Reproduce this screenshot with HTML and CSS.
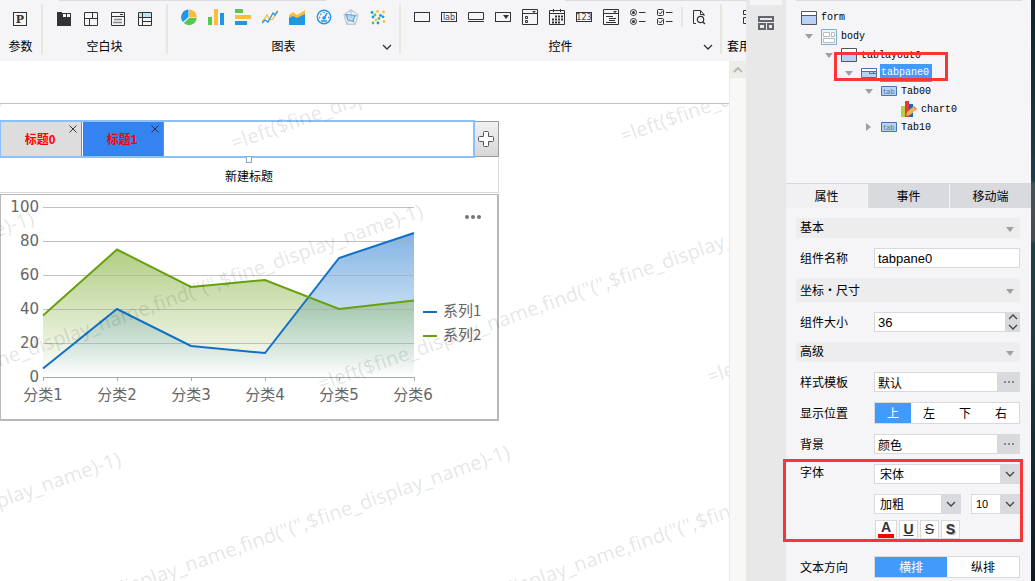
FILE: index.html
```html
<!DOCTYPE html>
<html lang="zh-CN">
<head>
<meta charset="utf-8">
<title>tabpane0</title>
<meta name="viewport" content="width=device-width, initial-scale=1">
<link rel="stylesheet" href="styles.css">
</head>
<body>
<div class="app">
  <main class="work">
    <header class="ribbon">
      <section class="group group-param">
        <div class="icons">
          <svg class="ico" viewBox="0 0 16 18"><rect x="1.5" y="3.5" width="13" height="13" fill="none" stroke="#333"/><text x="8" y="14" text-anchor="middle" class="ico-p">P</text></svg>
        </div>
        <div class="group-name">参数</div>
      </section>
      <section class="group">
        <div class="icons">
          <svg class="ico" viewBox="0 0 16 18"><path d="M1 3h5v1h9v13H1z" fill="#333"/><path d="M7 5h3v3H7zM11 5h3v3h-3z" fill="#f5f5f8"/></svg>
          <svg class="ico" viewBox="0 0 16 18"><path d="M1.500 3.500h13v13h-13zM1.500 9.500h13M9.500 3.500v6M6.500 9.500v7" fill="none" stroke="#333"/></svg>
          <svg class="ico" viewBox="0 0 16 18"><path d="M1.500 3.500h13v13h-13zM1.500 7.500h13" fill="none" stroke="#333"/><path d="M10 5h3v1h-3z" fill="#333"/><path d="M4 10.500h8M3 13.500h9" stroke="#888" stroke-width="1.500"/></svg>
          <svg class="ico" viewBox="0 0 16 18"><path d="M2 4h12v4H2z" fill="#bde3f7"/><path d="M1.500 3.500h13v13h-13zM1.500 8.500h13M5.500 3.500v13M5.500 12.500h9" fill="none" stroke="#333"/></svg>
        </div>
        <div class="group-name">空白块</div>
      </section>
      <section class="group">
        <div class="icons">
          <svg class="ico" viewBox="0 0 16 18"><path d="M7.500 8V0.500A7.600 7.600 0 0 0 2 13z" fill="#2196e3"/><path d="M8 8.500V0.500A7.600 7.600 0 0 1 15.800 8.500z" fill="#fdbd3a"/><path d="M8 9h7.700A7.700 7.700 0 0 1 2.800 14z" fill="#56c84c"/></svg>
          <svg class="ico" viewBox="0 0 16 18"><path d="M0 8h4v8H0z" fill="#56c84c"/><path d="M6 0h4v16H6z" fill="#fdbd3a"/><path d="M12 4h4v12h-4z" fill="#2196e3"/></svg>
          <svg class="ico" viewBox="0 0 16 18"><path d="M0 0h8v4H0z" fill="#56c84c"/><path d="M0 6h16v4H0z" fill="#fdbd3a"/><path d="M0 12h12v4H0z" fill="#2196e3"/></svg>
          <svg class="ico" viewBox="0 0 16 18"><path d="M0 13l5-7 3 5 3-1 4-8" fill="none" stroke="#fdbd3a" stroke-width="1.300"/><path d="M0 14l3-3 3 2 5-9 2 2 3-4" fill="none" stroke="#2196e3" stroke-width="1.300"/></svg>
          <svg class="ico" viewBox="0 0 16 18"><path d="M0 6l4-3 4 3 8-5v11H0z" fill="#fdbd3a"/><path d="M0 9l4-2 4 2 8-4v11H0z" fill="#2196e3"/></svg>
          <svg class="ico" viewBox="0 0 16 18"><circle cx="8" cy="8" r="6.700" fill="none" stroke="#2196e3" stroke-width="1.400"/><path d="M8 3v1M4.300 5l1 .8M3 8.500h1.200M12 8.500h1.200M5 12h6" stroke="#2196e3" stroke-width="1.500"/><path d="M8.500 9l2.500-5" stroke="#2196e3" stroke-width="1.500"/><circle cx="8" cy="9" r="1.800" fill="#2196e3"/></svg>
          <svg class="ico" viewBox="0 0 16 18"><path d="M8 .8l7 5-2.700 9.400H3.700L1 5.800zM8 8V1M8 8l7-2M8 8l4 7M8 8l-4 7M8 8L1 6" fill="none" stroke="#c9ccd1" stroke-width="1.400"/><path d="M3 5.500l9 1-2 6-5-1.500z" fill="#a7d7f4" fill-opacity=".4" stroke="#42a9e8" stroke-width="1.200"/></svg>
          <svg class="ico" viewBox="0 0 16 18"><g fill="#fdbd3a"><circle cx="7.500" cy="2.500" r="1.400"/><circle cx="13.500" cy="3" r="1.400"/><circle cx="6" cy="11" r="1.400"/><circle cx="14" cy="12.500" r="1.400"/></g><g fill="#2196e3"><circle cx="2" cy="3.500" r="1.400"/><circle cx="10.500" cy="6.500" r="1.400"/><circle cx="13" cy="7.800" r="1.400"/><circle cx="8" cy="14" r="1.400"/><circle cx="3" cy="8" r="1.400"/></g><g fill="#56c84c"><circle cx="5" cy="6" r="1.400"/><circle cx="9" cy="9.500" r="1.400"/><circle cx="3" cy="14" r="1.400"/></g></svg>
        </div>
        <div class="group-name">图表</div>
        <button class="more" aria-label="更多图表"><svg viewBox="0 0 10 6"><path d="M1 1l4 4 4-4" fill="none" stroke="#333" stroke-width="1.300"/></svg></button>
      </section>
      <section class="group">
        <div class="icons">
          <svg class="ico" viewBox="0 0 16 18"><rect x=".5" y="3.500" width="15" height="9" fill="none" stroke="#333"/></svg>
          <svg class="ico" viewBox="0 0 16 18"><rect x=".5" y="3.500" width="15" height="9" fill="none" stroke="#333"/><text x="8" y="11" text-anchor="middle" class="ico-txt">lab</text></svg>
          <svg class="ico" viewBox="0 0 16 18"><path d="M.5 3.500h15v7H.5zM0 12.500h16" fill="none" stroke="#333"/></svg>
          <svg class="ico" viewBox="0 0 16 18"><rect x=".5" y="3.500" width="15" height="9" fill="none" stroke="#333"/><path d="M8 6h6l-3 4z" fill="#333"/></svg>
          <svg class="ico" viewBox="0 0 16 18"><path d="M.5 .5h15v15H.5zM.5 4.500h15M3.500 7.500h2v2h-2zM3.500 11.500h2v2h-2z" fill="none" stroke="#333"/><path d="M10 2h4l-2 2z" fill="#333"/></svg>
          <svg class="ico" viewBox="0 0 16 18"><path d="M.5 1.500h15v14H.5zM.5 4.500h15M4.500 0v3M11.500 0v3" fill="none" stroke="#333"/><path d="M6 7.500h8M3 10.500h11M3 13.500h8" stroke="#333" stroke-width="2" stroke-dasharray="2 1"/></svg>
          <svg class="ico" viewBox="0 0 16 18"><rect x=".5" y="3.500" width="15" height="9" fill="none" stroke="#333"/><text x="8" y="11" text-anchor="middle" class="ico-txt">123</text></svg>
          <svg class="ico" viewBox="0 0 16 18"><path d="M.5 .5h15v15H.5zM.5 4.500h15M3 7.500h7M6 9.500h7M6 11.500h6M3 13.500h10" fill="none" stroke="#333"/><path d="M10 2h4l-2 2z" fill="#333"/></svg>
          <svg class="ico" viewBox="0 0 16 18"><g fill="none" stroke="#333"><circle cx="3.500" cy="3.500" r="3"/><circle cx="3.500" cy="12.500" r="3"/><path d="M9 3.500h6.500M9 12.500h6.500"/></g><circle cx="3.500" cy="3.500" r="1.500" fill="#333"/><circle cx="3.500" cy="12.500" r="1.500" fill="#333"/></svg>
          <svg class="ico" viewBox="0 0 16 18"><g fill="none" stroke="#333"><rect x=".5" y=".5" width="6" height="6" rx="1"/><rect x=".5" y="9.500" width="6" height="6" rx="1"/><path d="M2 3.500l1.300 1.500L5.500 2M2 12.500l1.300 1.500L5.500 11M9 3.500h6.500M9 12.500h6.500"/></g></svg>
          <span class="sep"></span>
          <svg class="ico" viewBox="0 0 16 18"><path d="M5 14.500H2.500V1.500h7l3.500 4V7M9.500 1.500v4H13" fill="none" stroke="#333"/><circle cx="9.500" cy="10.500" r="3.200" fill="none" stroke="#333" stroke-width="1.200"/><path d="M11.800 13l2.200 2" stroke="#333" stroke-width="1.400"/></svg>
        </div>
        <div class="group-name">控件</div>
        <button class="more" aria-label="更多控件"><svg viewBox="0 0 10 6"><path d="M1 1l4 4 4-4" fill="none" stroke="#333" stroke-width="1.300"/></svg></button>
      </section>
      <section class="group group-last">
        <div class="icons">
          <svg class="ico" viewBox="0 0 16 18"><path d="M.5 1.500h5v4h-5zM.5 8.500h5v6h-5zM8.500 1.500h6v13h-6z" fill="none" stroke="#333"/></svg>
        </div>
        <div class="group-name">套用</div>
      </section>
    </header>

    <div class="stage">
      <div class="canvas">
        <div class="canvas-top"></div>
        <div class="report">
          <div class="tabstrip">
            <div class="tabs-box">
              <div class="tab">标题0<button class="close" aria-label="关闭 标题0"><svg viewBox="0 0 8 8"><path d="M.5 .5l7 7M7.500 .5l-7 7" stroke="#333"/></svg></button></div>
              <div class="tab tab-on">标题1<button class="close" aria-label="关闭 标题1"><svg viewBox="0 0 8 8"><path d="M.5 .5l7 7M7.500 .5l-7 7" stroke="#333"/></svg></button></div>
              <span class="handle"></span>
            </div>
            <button class="add" aria-label="添加标题"><svg viewBox="0 0 16 16"><path d="M5.500 1.500q0-1 1-1h3q1 0 1 1v4h4q1 0 1 1v3q0 1-1 1h-4v4q0 1-1 1h-3q-1 0-1-1v-4h-4q-1 0-1-1v-3q0-1 1-1h4z" fill="#fff" stroke="#555"/></svg></button>
          </div>
          <div class="new-title">新建标题</div>
          <div class="chart-box">
            <svg class="chart" viewBox="0 0 496 224">
              <defs>
                <linearGradient id="blue" gradientUnits="userSpaceOnUse" x1="0" y1="38" x2="0" y2="182"><stop offset="0" stop-color="#1070cc" stop-opacity=".52"/><stop offset="1" stop-color="#1070cc" stop-opacity="0"/></linearGradient>
                <linearGradient id="green" gradientUnits="userSpaceOnUse" x1="0" y1="54" x2="0" y2="182"><stop offset="0" stop-color="#68a010" stop-opacity=".52"/><stop offset="1" stop-color="#68a010" stop-opacity="0"/></linearGradient>
              </defs>
              <path class="gridline" d="M42 12.500h371M42 46.500h371M42 80.500h371M42 114.500h371M42 148.500h371"/>
              <path d="M42 173.500L116 114L190 151L264 158L338 63L413 38V182H42z" fill="url(#blue)"/>
              <path d="M42 120.500L116 54.500L190 92L264 85L338 114L413 105.500V182H42z" fill="url(#green)"/>
              <path class="gridline gridline-soft" d="M42 46.500h371M42 80.500h371M42 114.500h371M42 148.500h371"/>
              <path class="axis" d="M42 182.500h371M42.500 182v4M116.500 182v4M190.500 182v4M264.500 182v4M338.500 182v4M413.500 182v4"/>
              <path class="line" d="M42 173.500L116 114L190 151L264 158L338 63L413 38" stroke="#1070c8"/>
              <path class="line" d="M42 120.500L116 54.500L190 92L264 85L338 114L413 105.500" stroke="#68a010"/>
              <g class="ticks" text-anchor="end"><text x="38" y="17">100</text><text x="38" y="51">80</text><text x="38" y="85">60</text><text x="38" y="119">40</text><text x="38" y="153">20</text><text x="38" y="187">0</text></g>
              <g class="ticks" text-anchor="middle"><text x="42" y="205">分类1</text><text x="116" y="205">分类2</text><text x="190" y="205">分类3</text><text x="264" y="205">分类4</text><text x="338" y="205">分类5</text><text x="412" y="205">分类6</text></g>
              <path d="M422 117h14" stroke="#1070c8" stroke-width="2"/><path d="M422 141h14" stroke="#68a010" stroke-width="2"/>
              <g class="legend"><text x="442" y="121">系列1</text><text x="442" y="145">系列2</text></g>
              <g fill="#737373"><circle cx="466" cy="22" r="2"/><circle cx="472" cy="22" r="2"/><circle cx="478" cy="22" r="2"/></g>
            </svg>
          </div>
        </div>
        <svg class="watermark" aria-hidden="true">
          <defs><text id="wm">=left($fine_display_name,find("(",$fine_display_name)-1)</text></defs>
          <use href="#wm" transform="translate(-155 53) rotate(-19.500)"/>
          <use href="#wm" transform="translate(234 46) rotate(-19.500)"/>
          <use href="#wm" transform="translate(623 39) rotate(-19.500)"/>
          <use href="#wm" transform="translate(-457 294) rotate(-19.500)"/>
          <use href="#wm" transform="translate(-68 287) rotate(-19.500)"/>
          <use href="#wm" transform="translate(321 287) rotate(-19.500)"/>
          <use href="#wm" transform="translate(710 280) rotate(-19.500)"/>
          <use href="#wm" transform="translate(-370 535) rotate(-19.500)"/>
          <use href="#wm" transform="translate(19 528) rotate(-19.500)"/>
          <use href="#wm" transform="translate(408 528) rotate(-19.500)"/>
        </svg>
      </div>
      <div class="scroll"><button class="scroll-up" aria-label="向上滚动"><svg viewBox="0 0 10 6"><path d="M1 5l4-4 4 4" fill="none" stroke="#b8b8b5" stroke-width="2"/></svg></button></div>
    </div>
  </main>

  <aside class="rail">
    <div class="rail-top"></div>
    <button class="rail-btn" aria-label="组件库"><svg viewBox="0 0 16 14"><path d="M1 1h14v4H1zM1 8h6v5H1zM10 8h5v5h-5z" fill="none" stroke="#62656e" stroke-width="2"/></svg></button>
  </aside>

  <aside class="panel">
    <ul class="tree">
      <li class="node tall"><svg class="n-ico" viewBox="0 0 16 14"><path d="M.5 .5h15v13H.5z" fill="#b9d1f5" stroke="#555"/><path d="M1 1h14v3H1z" fill="#fff"/><path d="M1 4.500h14" stroke="#555"/></svg>form</li>
      <li class="node tall l1"><i class="open"></i><svg class="n-ico" viewBox="0 0 16 16"><path d="M.5 .5h15v15H.5z" fill="#eef6fa" stroke="#76b0cf"/><path d="M2.500 3.500h6v4h-6zM10.500 3.500h3v4h-3zM2.500 9.500h11v4h-11z" fill="#fff" stroke="#bbb"/></svg>body</li>
      <li class="node l2"><i class="open"></i><svg class="n-ico" viewBox="0 0 16 14"><path d="M.5 .5h15v13H.5z" fill="#b9d1f5" stroke="#555"/><path d="M1 1h14v3H1z" fill="#fff"/><path d="M1 4.500h14" stroke="#555"/></svg>tablayout0</li>
      <li class="node l3"><i class="open"></i><svg class="n-ico" viewBox="0 0 16 10"><path d="M.5 .5h15v9H.5z" fill="#b9d1f5" stroke="#4873ac"/><path d="M1 1h14v2H1z" fill="#fff"/><path d="M1 3.500h14M8.500 4v1.500h7M12.500 4v2" fill="none" stroke="#4873ac"/></svg><span class="picked">tabpane0</span></li>
      <li class="node l4"><i class="open"></i><svg class="n-ico" viewBox="0 0 16 10"><path d="M.5 .5h15v9H.5z" fill="#b9d1f5" stroke="#4873ac"/><text x="8" y="8" text-anchor="middle" class="n-tab">tab</text></svg>Tab00</li>
      <li class="node l5"><svg class="n-ico" viewBox="0 0 16 16"><path d="M0 5h4v11H0z" fill="#b4cf45"/><path d="M4 0h4v16H4z" fill="#e5393c"/><path d="M8 3h4v13H8z" fill="#0e70b8"/><path d="M5 15l1-4 7-6 3 3-7 6z" fill="#f6b24e"/><path d="M13 5l3 3-1.500 1-2.500-3z" fill="#f08a80"/></svg>chart0</li>
      <li class="node l4"><i class="shut"></i><svg class="n-ico" viewBox="0 0 16 10"><path d="M.5 .5h15v9H.5z" fill="#b9d1f5" stroke="#4873ac"/><text x="8" y="8" text-anchor="middle" class="n-tab">tab</text></svg>Tab10</li>
    </ul>
    <span class="mark mark-tree"></span>

    <div class="ptabs" role="tablist">
      <button class="ptab ptab-on" role="tab" aria-selected="true">属性</button>
      <button class="ptab" role="tab" aria-selected="false">事件</button>
      <button class="ptab" role="tab" aria-selected="false">移动端</button>
    </div>

    <form class="props">
      <h2 class="section">基本<i class="open"></i></h2>
      <div class="row"><label for="name">组件名称</label><input class="field" id="name" value="tabpane0"></div>
      <h2 class="section section-tall">坐标・尺寸<i class="open"></i></h2>
      <div class="row"><label for="size">组件大小</label>
        <div class="combo"><input class="field" id="size" value="36"><span class="spin"><button type="button" aria-label="增大"><svg viewBox="0 0 10 6"><path d="M1 5l4-4 4 4" fill="none" stroke="#444" stroke-width="1.300"/></svg></button><button type="button" aria-label="减小"><svg viewBox="0 0 10 6"><path d="M1 1l4 4 4-4" fill="none" stroke="#444" stroke-width="1.300"/></svg></button></span></div></div>
      <h2 class="section">高级<i class="open"></i></h2>
      <div class="row"><label for="tpl">样式模板</label><div class="combo"><input class="field cjk" id="tpl" value="默认"><button type="button" class="dots" aria-label="选择样式模板"><svg viewBox="0 0 12 2"><path d="M1 0h2v2H1zM5 0h2v2H5zM9 0h2v2H9z" fill="#888"/></svg></button></div></div>
      <div class="row row-seg"><span>显示位置</span><div class="seg"><button type="button" class="on">上</button><button type="button">左</button><button type="button">下</button><button type="button">右</button></div></div>
      <div class="row"><label for="bg">背景</label><div class="combo"><input class="field cjk" id="bg" value="颜色"><button type="button" class="dots" aria-label="选择背景"><svg viewBox="0 0 12 2"><path d="M1 0h2v2H1zM5 0h2v2H5zM9 0h2v2H9z" fill="#888"/></svg></button></div></div>
      <div class="font-block">
        <div class="row"><label class="font-label" for="family">字体</label><span class="drop"><select id="family"><option>宋体</option></select><svg class="chev" viewBox="0 0 10 6"><path d="M1 1l4 4 4-4" fill="none" stroke="#444" stroke-width="1.300"/></svg></span></div>
        <div class="row"><span></span><div class="pair">
          <span class="drop drop-style"><select aria-label="字形"><option>加粗</option></select><svg class="chev" viewBox="0 0 10 6"><path d="M1 1l4 4 4-4" fill="none" stroke="#444" stroke-width="1.300"/></svg></span>
          <span class="drop drop-size"><select aria-label="字号"><option>10</option></select><svg class="chev" viewBox="0 0 10 6"><path d="M1 1l4 4 4-4" fill="none" stroke="#444" stroke-width="1.300"/></svg></span>
        </div></div>
        <div class="row row-buttons"><span></span><div class="fmt"><button type="button" class="f-color" aria-label="字体颜色">A</button><button type="button" class="f-under" aria-label="下划线">U</button><button type="button" class="f-strike" aria-label="删除线">S</button><button type="button" class="f-shadow" aria-label="阴影">S</button></div></div>
        <span class="mark mark-font"></span>
      </div>
      <div class="row row-seg"><span>文本方向</span><div class="seg"><button type="button" class="on">横排</button><button type="button">纵排</button></div></div>
    </form>
  </aside>
  <div class="desktop"></div>
</div>
</body>
</html>
```
FILE: styles.css
```css
* { box-sizing: border-box; }

body {
  margin: 0;
  font: 12px/16px "Liberation Sans", "Noto Sans CJK SC", sans-serif;
  color: #000;
  background: #f5f5f8;
}

button, input, select {
  margin: 0;
  padding: 0;
  border: 0;
  border-radius: 0;
  background: none;
  font: inherit;
  color: inherit;
}

svg { display: block; }

.app {
  display: grid;
  grid-template-columns: minmax(0, 1fr) 39px 246px 4px;
  height: 100vh;
  overflow: hidden;
}

.work {
  display: flex;
  flex-direction: column;
  min-width: 0;
  min-height: 0;
}

/* Ribbon */
.ribbon {
  display: flex;
  flex: none;
  height: 61px;
  padding: 4px 0 7px;
  overflow: hidden;
  background:
    linear-gradient(#dcdcde, #dcdcde) 59px 0 / 267px 1px no-repeat,
    linear-gradient(#dcdcde, #dcdcde) 565px 0 / 200px 1px no-repeat,
    #f5f5f8;
}

.group {
  position: relative;
  flex: none;
  padding: 5px 13px 0;
  border-right: 2px solid #e8e7df;
}

.group-param { padding-left: 12px; }

.group-last { padding-left: 5px; }
.group-last .icons { padding-left: 16px; }

.icons {
  display: flex;
  gap: 11px;
}

.ico {
  width: 16px;
  height: 18px;
}

.ico-p { font: bold 11px "DejaVu Serif", serif; fill: #333; }
.ico-txt { font: 8px "DejaVu Sans", sans-serif; fill: #444; }

.group-name {
  margin: 12px -8px 0;
  text-align: center;
  white-space: nowrap;
}

.group-param .group-name { margin-right: -9px; }

.group-last .group-name {
  margin: 12px 0 0;
  text-align: left;
}

.sep {
  width: 2px;
  height: 20px;
  margin: -2px -3px 0;
  background: #e8e7df;
}

.more {
  position: absolute;
  right: 7px;
  bottom: 4px;
}

.more svg { width: 10px; height: 6px; }

/* Canvas */
.stage {
  display: flex;
  flex: 1;
  min-height: 0;
  background: #fff;
}

.canvas {
  position: relative;
  flex: 1;
  min-width: 0;
  overflow: hidden;
}

.canvas-top {
  height: 43px;
  border-bottom: 1px solid #c4c4c4;
}

.report {
  width: 499px;
  padding-top: 16px;
}

.tabstrip {
  display: flex;
  height: 38px;
}

.tabs-box {
  position: relative;
  display: flex;
  flex: 1;
  gap: 1px;
  border: 2px solid #8cc0fa;
  border-left-width: 1px;
}

.tab {
  position: relative;
  width: 81px;
  padding-right: 2px;
  border-right: 1px solid #8b8b8b;
  background: #ddd;
  color: #f00;
  font-weight: bold;
  line-height: 36px;
  text-align: center;
}

.tab-on { background: #3483f0; }

.close {
  position: absolute;
  top: 3px;
  right: 4px;
}

.close svg { width: 8px; height: 8px; }

.handle {
  position: absolute;
  top: 34px;
  left: 245px;
  width: 6px;
  height: 7px;
  border: 1px solid #80a8c8;
  background: #fff;
}

.add {
  display: grid;
  place-items: center;
  width: 24px;
  margin: 1px 0;
  padding-right: 1px;
  border: 1px solid #999;
  border-left: 0;
  background: linear-gradient(#f2f2f2, #d6d6d6);
}

.add svg { width: 16px; height: 16px; }

.new-title {
  height: 35px;
  border: solid #d8d8d8;
  border-width: 0 1px 1px 0;
  line-height: 38px;
  text-align: center;
}

.chart-box {
  margin-top: 1px;
  border: 1px solid #b8b8b8;
  border-width: 1px 2px 2px 1px;
}

.chart { width: 496px; height: 224px; }

.gridline { stroke: #c0c0c0; }
.gridline-soft { stroke-opacity: .6; }
.axis { stroke: #a8a8a8; }
.line { fill: none; stroke-width: 2; }
.ticks { font: 15px "DejaVu Sans", "Noto Sans CJK SC", sans-serif; fill: #666; }
.legend { font: 15px "Noto Sans CJK SC", sans-serif; fill: #666; }

.watermark {
  position: absolute;
  top: 43px;
  left: 0;
  width: 100%;
  height: 100%;
  overflow: hidden;
  font: 20px "Noto Sans", sans-serif;
  fill: #000;
  fill-opacity: .11;
  pointer-events: none;
}

.scroll {
  width: 17px;
  border-left: 1px solid #ecece6;
  background: #f8f8f6;
}

.scroll-up {
  display: grid;
  place-items: center;
  width: 100%;
  height: 17px;
  background: #ecece9;
}

.scroll-up svg { width: 10px; height: 6px; }

/* Narrow tool rail */
.rail {
  display: flex;
  flex-direction: column;
  align-items: center;
  gap: 11px;
  background: #e8e8e8;
}

.rail-top {
  width: 32px;
  height: 5px;
  background: #f5f5f8;
}

.rail-btn svg { width: 16px; height: 14px; }

/* Property panel */
.panel {
  position: relative;
  min-width: 0;
  border-left: 1px solid #e6e6e8;
}

.tree {
  height: 183px;
  margin: 0;
  padding: 8px 0 0 15px;
  list-style: none;
  background: linear-gradient(#dcdcde, #dcdcde) 10px 0 / 226px 1px no-repeat;
  font: 10px "Liberation Mono", "DejaVu Sans Mono", monospace;
}

.node {
  position: relative;
  display: flex;
  align-items: center;
  gap: 4px;
  height: 18px;
}

.tall { height: 19px; }

.n-ico { flex: none; width: 16px; }
.n-tab { font: 7px "DejaVu Sans", sans-serif; fill: #4873ac; }

.l1 { padding-left: 4px; }
.l2 { padding-left: 24px; }
.l3 { padding-left: 44px; }
.l4 { padding-left: 64px; }
.l5 { padding-left: 100px; }

.open {
  width: 0;
  height: 0;
  border: solid transparent;
  border-width: 5px 4px 0;
  border-top-color: #a0a0a0;
}

.shut {
  width: 0;
  height: 0;
  border: solid transparent;
  border-width: 4px 0 4px 5px;
  border-left-color: #a0a0a0;
}

.node .open { margin-right: 4px; }
.node .shut { margin-left: 1px; margin-right: 6px; }

.picked {
  margin-left: -1px;
  padding: 0 3px 0 1px;
  background: #409bfa;
  color: #fff;
  line-height: 18px;
}

.mark {
  position: absolute;
  border: 3px solid #fa3535;
  pointer-events: none;
}

.mark-tree {
  top: 52px;
  left: 48px;
  width: 114px;
  height: 29px;
}

.ptabs {
  display: grid;
  grid-template-columns: repeat(3, 1fr);
  gap: 1px;
  height: 25px;
  border-top: 1px solid #d6d7da;
}

.ptab { padding-top: 2px; background: #d9dade; }
.ptab-on { background: #f1f1f3; }

.props {
  display: flex;
  flex-direction: column;
  gap: 10px;
  padding: 10px 11px 0 10px;
}

.section {
  display: flex;
  align-items: center;
  justify-content: space-between;
  height: 20px;
  margin: 0;
  padding: 0 6px 0 4px;
  background: #ededed;
  font-size: 12px;
  font-weight: normal;
}

.section .open { margin-top: 3px; }

.section-tall { height: 24px; padding-top: 2px; }
.section-tall .open { margin-top: 0; }

.row {
  display: grid;
  grid-template-columns: 74px minmax(0, 1fr);
  align-items: center;
  height: 20px;
  padding-left: 4px;
}

.row > :first-child { padding-top: 2px; }

.row-seg { height: 22px; }

.field {
  width: 100%;
  min-width: 0;
  height: 20px;
  padding: 0 3px;
  border: 1px solid #d8d9dc;
  background: #fff;
  font-size: 13px;
}

.cjk { font-size: 12px; }

.combo { display: flex; height: 20px; }

.spin {
  display: grid;
  width: 14px;
  flex: none;
  background: #d9dade;
}

.spin button { display: grid; place-items: center; }
.spin svg { width: 10px; height: 6px; }

.dots {
  display: grid;
  place-items: center;
  flex: none;
  width: 22px;
  background: #d9dade;
}

.dots svg { width: 12px; height: 2px; }

.seg {
  display: flex;
  height: 22px;
  border: 1px solid #d8d9dc;
  background: #fff;
}

.seg button { flex: 1; padding-top: 2px; }
.seg .on { background: #409bfa; color: #fff; }

.font-block {
  position: relative;
  display: grid;
  gap: 10px;
  margin-bottom: 7px;
}

.font-label { align-self: start; line-height: 14px; }

.drop {
  position: relative;
  display: block;
  flex: 1;
  height: 20px;
}

.drop select {
  width: 100%;
  height: 20px;
  padding: 2px 20px 0 5px;
  border: 1px solid #d8d9dc;
  appearance: none;
  background: linear-gradient(#d9dade, #d9dade) right / 19px 100% no-repeat #fff;
}

.drop .chev {
  position: absolute;
  top: 7px;
  right: 5px;
  width: 10px;
  height: 6px;
  pointer-events: none;
}

.drop-size { flex: 0 0 49px; }
.drop-size select { padding: 0 20px 0 4px; font-size: 11px; }

.pair { display: flex; gap: 10px; }

.row-buttons { margin-top: -4px; height: 19px; }

.fmt { display: flex; gap: 2px; padding-left: 1px; }

.fmt button {
  width: 19px;
  height: 19px;
  border: 1px solid #d8d9dc;
  background: #fff;
  color: #333;
  font-size: 14px;
  font-weight: bold;
  line-height: 17px;
}

.fmt .f-color {
  width: 22px;
  background: linear-gradient(#f00, #f00) center bottom / 16px 4px no-repeat #fff;
  line-height: 13px;
  padding-bottom: 4px;
}

.fmt .f-under { text-decoration: underline; }
.fmt .f-strike { font-weight: normal; text-decoration: line-through; }
.fmt .f-shadow { text-shadow: 1px 1px 1px #999; }

.mark-font {
  top: -5px;
  right: -3px;
  bottom: -3px;
  left: -13px;
}

.desktop {
  background: linear-gradient(#10222d 0, #1d3d4a 180px, #48525a 184px, #444d53 240px, #1f3f48 244px, #1b3944 60%, #0c1a24);
}
```
